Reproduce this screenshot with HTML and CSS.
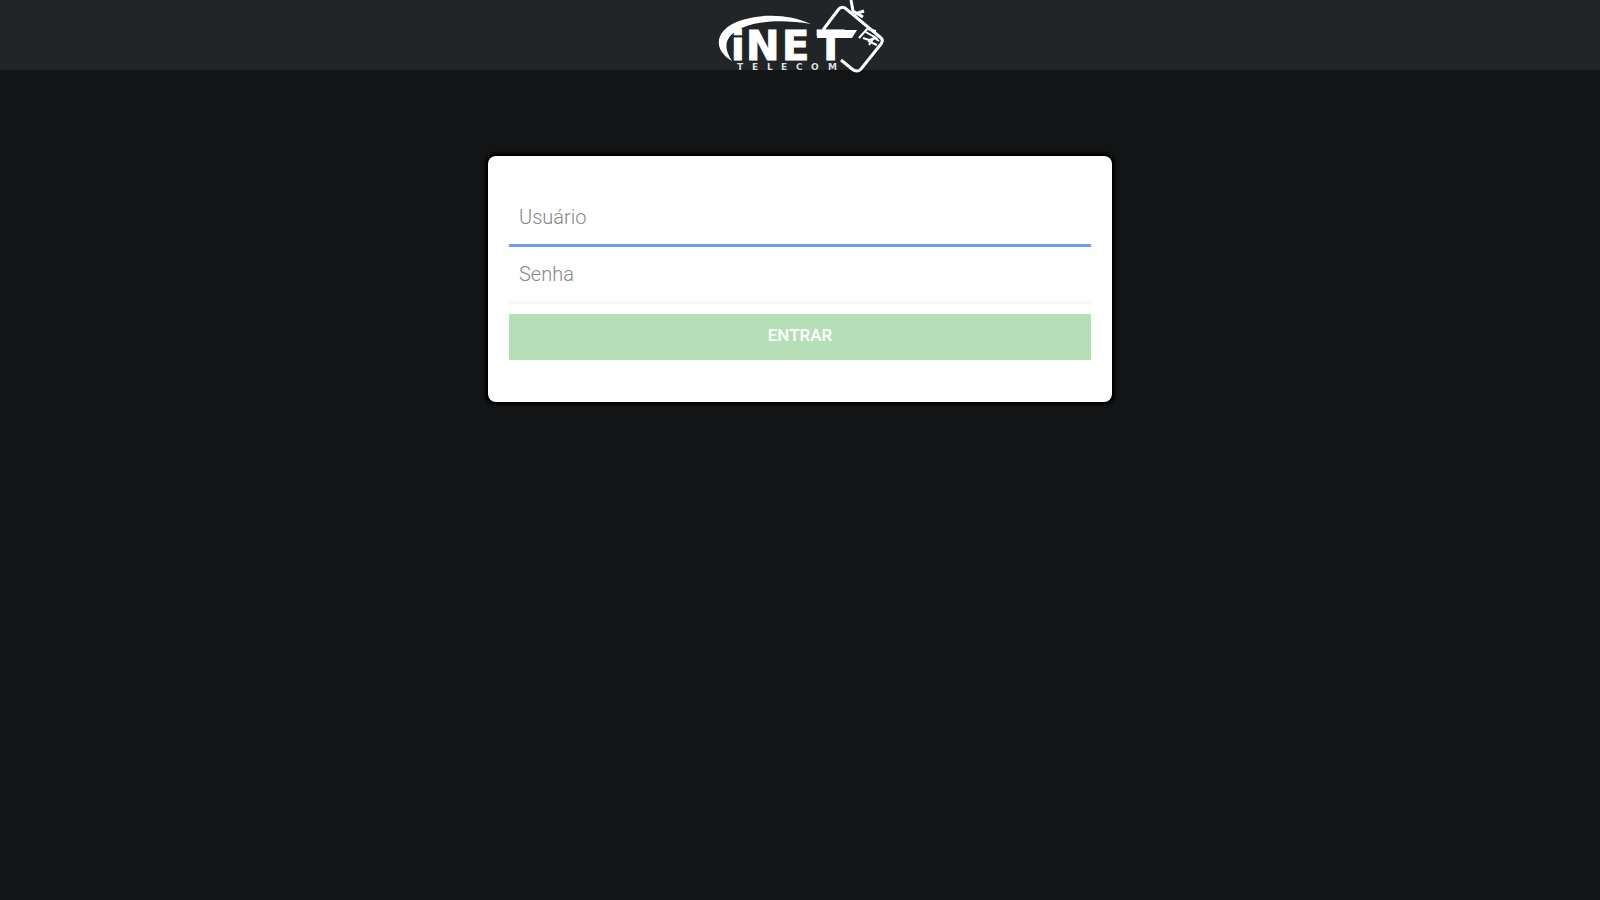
FILE: index.html
```html
<!DOCTYPE html>
<html lang="pt-BR">
<head>
    <meta charset="UTF-8">
    <meta name="viewport" content="width=device-width, initial-scale=1.0">
    <title>iNET Telecom</title>
    <link rel="stylesheet" href="styles.css">
</head>
<body>

    <header class="topbar">
        <svg class="logo" viewBox="-4 0 172 74" role="img" aria-label="iNET Telecom">
            <!-- swoosh -->
            <path class="fill" d="M14 61C-6 49-3 30 21 21C43 13 72 14 93 24C69 20 43 20 26 27C7 35 4 46 14 61Z"/>
            <!-- tag -->
            <path class="line" d="M105 30L120 10Q123 6 127 8L162 37Q166 40 163 44L143 69Q139 73 134 69L123 60"/>
            <path class="line" d="M133 0L135 11L145 17M137 14L146 11"/>
            <path class="line thin" d="M141 38L149 29L158 31M146 31L158 38L151 40L145 38M151 45L157 36M150 41L159 45M155 37L161 41"/>
            <text class="name" y="60" x="13 28 64 99">iNET</text>
            <path class="fill" d="M99 30L139 30L134 38L99 38Z"/>
            <text class="sub" y="70" x="19 34 49 63 78 93 110">TELECOM</text>
        </svg>
    </header>

    <main>
        <form class="login">
            <input class="field active" type="text" name="usuario" placeholder="Usuário" aria-label="Usuário">
            <input class="field" type="password" name="senha" placeholder="Senha" aria-label="Senha">
            <button class="enter" type="submit" disabled>ENTRAR</button>
        </form>
    </main>

</body>
</html>
```
FILE: styles.css
```css
* {
    box-sizing: border-box;
}

body {
    margin: 0;
    min-height: 100vh;
    background-color: #121415;
    font-family: Roboto, sans-serif;
}

.topbar {
    height: 70px;
    display: flex;
    justify-content: center;
    background-color: #212528;
}

.logo {
    width: 172px;
    height: 74px;
    flex: none;
    overflow: visible;
}

.fill {
    fill: #fff;
}

.line {
    fill: none;
    stroke: #fff;
    stroke-width: 3;
}

.thin {
    stroke-width: 2;
}

.name {
    font: bold 40px "DejaVu Sans", sans-serif;
    fill: #fff;
    stroke: #fff;
    stroke-width: 1;
}

.sub {
    font: bold 9px "DejaVu Sans", sans-serif;
    fill: #ddd;
}

.login {
    width: 39%;
    margin: 86px auto 0;
    padding: 34px 21px 42px;
    display: flex;
    flex-direction: column;
    background-color: #fefefe;
    border-radius: 8px;
    box-shadow: 0 0 3px 3px #000;
}

.field {
    height: 57px;
    padding: 0 10px;
    border: none;
    border-bottom: 3px solid #f8f8f8;
    outline: none;
    background: none;
    font-family: inherit;
    font-size: 20px;
    font-weight: 300;
}

.field::placeholder {
    color: #888;
    opacity: 1;
}

.active {
    border-color: #7499f2;
}

.enter {
    height: 46px;
    margin-top: 10px;
    padding: 0 0 4px;
    border: none;
    background-color: #b5dfb7;
    color: #fff;
    font-family: inherit;
    font-size: 17px;
    font-weight: 500;
}
```
